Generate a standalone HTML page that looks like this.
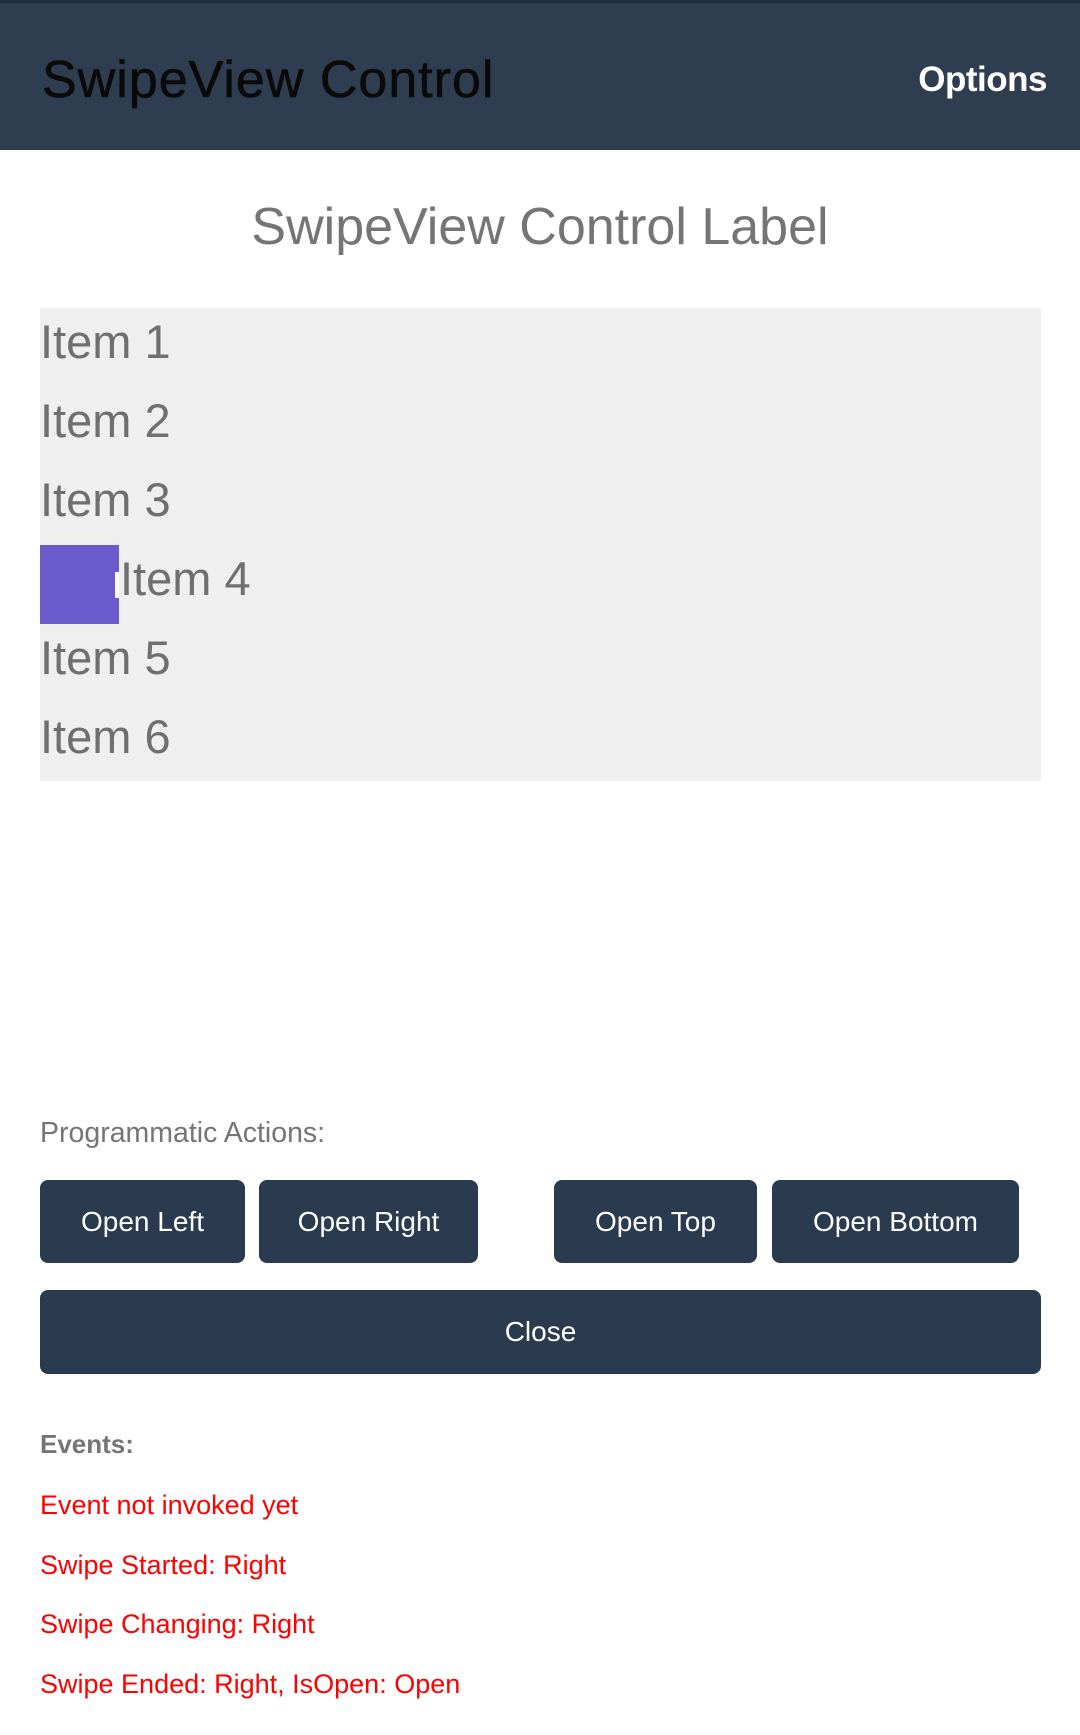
<!DOCTYPE html>
<html><head><meta charset="utf-8"><style>
*{margin:0;padding:0;box-sizing:border-box}
body{width:1080px;height:1735px;background:#fff;font-family:"Liberation Sans",sans-serif;position:relative;overflow:hidden}
.hdr{position:absolute;left:0;top:0;width:1080px;height:150px;background:#2e3e50;border-top:3px solid #1c2d40}
.t{position:absolute;left:42px;top:47px;font-size:52px;color:#0a0a0a;line-height:60px;letter-spacing:1px;-webkit-text-stroke:0.6px #0a0a0a}
.o{position:absolute;right:33px;top:55px;font-size:35px;color:#fff;font-weight:bold;line-height:44px;letter-spacing:-0.5px}
.lbl{position:absolute;left:0;width:1080px;top:195px;text-align:center;font-size:52px;color:#757575;line-height:64px}
.box{position:absolute;left:40px;top:308px;width:1001px;height:473px;background:#efefef}
.it{position:absolute;left:40px;font-size:47px;color:#6f6f6f;line-height:79px;height:79px}
.pb{position:absolute;left:40px;top:545px;width:79px;height:79px;background:#6a5acd}
.pw{position:absolute;left:115px;top:572px;width:4px;height:26px;background:#fff}
.pa{position:absolute;left:40px;top:1117px;font-size:28.5px;color:#757575}
.b{position:absolute;top:1180px;height:83px;background:#2b3b4f;border-radius:8px;color:#fff;font-size:28px;text-align:center;line-height:83px}
.ev{position:absolute;left:40px;font-size:26px;color:#757575;font-weight:bold}
.r{position:absolute;left:40px;font-size:27px;color:#f00;line-height:34px}
</style></head><body>
<div class="hdr"><div class="t">SwipeView Control</div><div class="o">Options</div></div>
<div class="lbl">SwipeView Control Label</div>
<div class="box"></div>
<div class="it" style="top:302px">Item 1</div>
<div class="it" style="top:381px">Item 2</div>
<div class="it" style="top:460px">Item 3</div>
<div class="pb"></div><div class="pw"></div>
<div class="it" style="top:539px;left:120px">Item 4</div>
<div class="it" style="top:618px">Item 5</div>
<div class="it" style="top:697px">Item 6</div>
<div class="pa">Programmatic Actions:</div>
<div class="b" style="left:40px;width:205px">Open Left</div>
<div class="b" style="left:259px;width:219px">Open Right</div>
<div class="b" style="left:554px;width:203px">Open Top</div>
<div class="b" style="left:772px;width:247px">Open Bottom</div>
<div class="b" style="left:40px;width:1001px;top:1290px;height:84px;line-height:84px">Close</div>
<div class="ev" style="top:1429px">Events:</div>
<div class="r" style="top:1488px">Event not invoked yet</div>
<div class="r" style="top:1548px">Swipe Started: Right</div>
<div class="r" style="top:1607px">Swipe Changing: Right</div>
<div class="r" style="top:1667px">Swipe Ended: Right, IsOpen: Open</div>
</body></html>
